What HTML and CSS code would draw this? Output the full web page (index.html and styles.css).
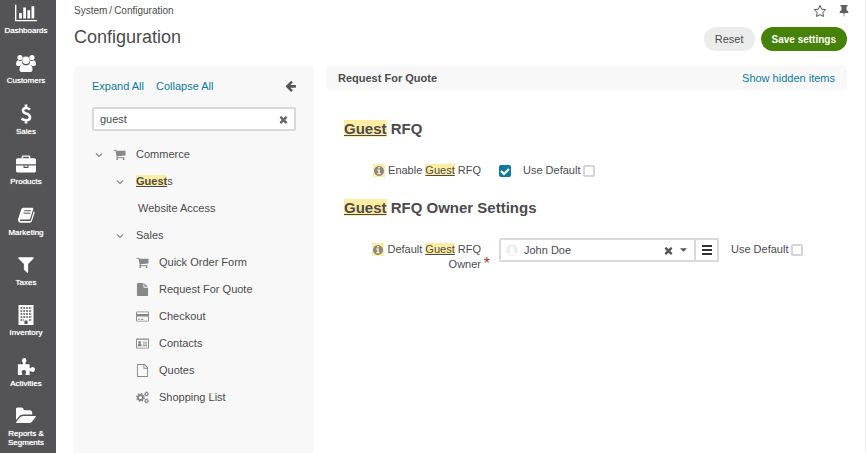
FILE: index.html
```html
<!DOCTYPE html>
<html lang="en">
<head>
<meta charset="utf-8">
<meta name="viewport" content="width=device-width, initial-scale=1">
<title>Configuration</title>
<link rel="stylesheet" href="styles.css">
</head>
<body>
<svg class="defs" aria-hidden="true">
  <symbol id="cart" viewBox="0 0 1792 1792"><path d="M704 1536q0 52-38 90t-90 38-90-38-38-90 38-90 90-38 90 38 38 90zm896 0q0 52-38 90t-90 38-90-38-38-90 38-90 90-38 90 38 38 90zm128-1088v512q0 24-16.500 42.500t-40.500 21.500l-1044 122q13 60 13 70 0 16-24 64h920q26 0 45 19t19 45-19 45-45 19h-1024q-26 0-45-19t-19-45q0-11 8-31.500t16-36 21.500-40 15.500-29.500l-177-823h-204q-26 0-45-19t-19-45 19-45 45-19h256q16 0 28.500 6.500t19.500 15.500 13 24.500 8 26 5.500 29.500 4.500 26h1201q26 0 45 19t19 45z"/></symbol>
  <symbol id="times" viewBox="192 192 1408 1408"><path d="M1490 1322q0 40-28 68l-136 136q-28 28-68 28t-68-28l-294-294-294 294q-28 28-68 28t-68-28l-136-136q-28-28-28-68t28-68l294-294-294-294q-28-28-28-68t28-68l136-136q28-28 68-28t68 28l294 294 294-294q28-28 68-28t68 28l136 136q28 28 28 68t-28 68l-294 294 294 294q28 28 28 68z"/></symbol>
  <symbol id="info" viewBox="128 128 1536 1536"><path d="M1152 1376v-160q0-14-9-23t-23-9h-96v-512q0-14-9-23t-23-9h-320q-14 0-23 9t-9 23v160q0 14 9 23t23 9h96v320h-96q-14 0-23 9t-9 23v160q0 14 9 23t23 9h448q14 0 23-9t9-23zm-128-896v-160q0-14-9-23t-23-9h-192q-14 0-23 9t-9 23v160q0 14 9 23t23 9h192q14 0 23-9t9-23zm640 416q0 209-103 385.500t-279.500 279.500-385.500 103-385.500-103-279.500-279.500-103-385.500 103-385.500 279.500-279.500 385.500-103 385.500 103 279.500 279.500 103 385.500z"/></symbol>
  <symbol id="chevron" viewBox="0 0 8 8"><path d="M1 2.500 4 5.500 7 2.500" fill="none" stroke="currentColor" stroke-width="1.200"/></symbol>
</svg>
<div class="app">
  <nav class="nav" aria-label="Main">
    <a href="#"><svg class="wide" viewBox="0 128 2048 1536"><path d="M640 896v512h-256v-512h256zm384-512v1024h-256v-1024h256zm1024 1152v128h-2048v-1536h128v1408h1920zm-640-896v768h-256v-768h256zm384-384v1152h-256v-1152h256z"/></svg><span>Dashboards</span></a>
    <a href="#"><svg viewBox="0 0 20 18"><circle cx="4" cy="3.500" r="2.600"/><circle cx="16" cy="3.500" r="2.600"/><path d="M2 6.200Q4 7.700 6 6.500 5.700 9 7 10.500 4.500 10.500 3.500 12H2Q0 12 0 10 0 7 2 6.200zM18 6.200Q16 7.700 14 6.500 14.300 9 13 10.500 15.500 10.500 16.500 12H18Q20 12 20 10 20 7 18 6.200z"/><circle cx="10" cy="6.200" r="3.700"/><path d="M6.700 10.300Q10 12.500 13.300 10.300 16.500 11 16.500 15.500 16.500 18 14 18H6Q3.500 18 3.500 15.500 3.500 11 6.700 10.300z"/></svg><span>Customers</span></a>
    <a href="#"><svg viewBox="0 0 20 20"><path d="M14 5.500Q12 4 10 4 7 4 7 6.500 7 8.500 10 9.500 14 10.500 14 13.500 14 16.300 10 16.300 7.500 16.300 5.500 14.500M10 .500V4M10 16V19.500" fill="none" stroke="#fff" stroke-width="2.600"/></svg><span>Sales</span></a>
    <a href="#"><svg viewBox="0 0 1792 1536"><path d="M640 256h512v-128h-512v128zm1152 640v480q0 66-47 113t-113 47h-1472q-66 0-113-47t-47-113v-480h672v160q0 26 19 45t45 19h320q26 0 45-19t19-45v-160h672zm-768 0v128h-256v-128h256zm768-480v384h-1792v-384q0-66 47-113t113-47h352v-160q0-40 28-68t68-28h576q40 0 68 28t28 68v160h352q66 0 113 47t47 113z"/></svg><span>Products</span></a>
    <a href="#"><svg class="small" viewBox="0 0 20 18"><path d="M7 1H17Q18.500 1 18 2.700L14.700 13Q14.300 14 13 14H4Q3 14 3.200 15 3.400 15.700 4.300 15.700H14Q15.200 15.700 15.500 14.700L18.600 4.700Q20 5.200 19.500 6.800L16.500 16Q16 17.500 14.300 17.500H4Q2 17.500 1.200 15.300 .800 14 1.500 12.500L4.700 2.800Q5.200 1 7 1z"/><path d="M8 4.300H15.500M7.200 7H14.700" stroke="#515153" stroke-width="1.100"/></svg><span>Marketing</span></a>
    <a href="#"><svg class="small" viewBox="80 144 1632 1632"><path d="M1595 295q17 41-14 70l-493 493v742q0 42-39 59-13 5-25 5-27 0-45-19l-256-256q-19-19-19-45v-486l-493-493q-31-29-14-70 17-39 59-39h1280q42 0 59 39z"/></svg><span>Taxes</span></a>
    <a href="#"><svg viewBox="0 0 20 20"><path d="M2.500 0H17.500V20H2.500z"/><path d="M4.500 3H16M4.500 6H16M4.500 9H16M4.500 12H16M4.500 15H8M12.900 15H16" fill="none" stroke="#515153" stroke-width="1.700" stroke-dasharray="1.800 1"/><path d="M8.500 15.500H11.500V19H8.500z" fill="#515153"/></svg><span>Inventory</span></a>
    <a href="#"><svg class="small" viewBox="0 0 20 20"><path d="M1 8H6Q7.300 8 6.500 6.500 5.300 5 5.500 3.500 6 1.200 8 1.200T10.500 3.500Q10.700 5 9.500 6.500 8.800 8 10 8H14V11.500Q14 13 15.500 12 17 10.700 18.500 11.500 20 12.300 20 14T18.500 16.300Q17 17 15.500 15.800 14 15 14 16.500V20H10.500Q9 20 9.500 18.500 10.500 17 10 15.800 9.300 14.500 7.700 14.500T5.300 15.800Q4.800 17 5.800 18.500 6.300 20 5 20H1z"/></svg><span>Activities</span></a>
    <a href="#"><svg viewBox="0 256 1820 1280"><path d="M1815 952q0 31-31 66l-336 396q-43 51-120.500 86.500t-143.500 35.500h-1088q-34 0-60.500-13t-26.500-43q0-31 31-66l336-396q43-51 120.500-86.500t143.500-35.500h1088q34 0 60.500 13t26.500 43zm-343-344v160h-832q-94 0-197 47.500t-164 119.500l-337 396-5 6v-985q0-92 66-158t158-66h320q92 0 158 66t66 158v32h544q92 0 158 66t66 158z"/></svg><span>Reports &amp; Segments</span></a>
  </nav>
  <div class="page">
    <header class="top">
      <div class="crumbs"><a href="#">System</a><span>/</span><span>Configuration</span></div>
      <div class="page-tools">
        <button type="button" aria-label="Add to favorites"><svg viewBox="0 0 14 14"><path d="M7 1.500 8.700 5.200 12.700 5.700 9.800 8.500 10.500 12.500 7 10.600 3.500 12.500 4.200 8.500 1.300 5.700 5.300 5.200z" fill="none" stroke="#555" stroke-width="1"/></svg></button>
        <button type="button" aria-label="Pin page"><svg viewBox="0 0 14 14"><path d="M3.500 1H10.500V2.500H9.500V6Q11.500 7 11.500 9H7.600L7 13.500 6.400 9H2.500Q2.500 7 4.500 6V2.500H3.500z"/></svg></button>
      </div>
    </header>
    <div class="title-row">
      <h1>Configuration</h1>
      <div class="actions">
        <button type="button" class="btn">Reset</button>
        <button type="submit" form="config" class="btn btn-primary">Save settings</button>
      </div>
    </div>
    <div class="columns">
      <aside class="sidebar">
        <div class="side-head">
          <a href="#">Expand All</a><a href="#">Collapse All</a>
          <button type="button" aria-label="Hide panel"><svg viewBox="64 160 1600 1500"><path d="M1664 896v128q0 53-32.500 90.500t-84.500 37.500h-704l293 294q38 36 38 90t-38 90l-75 76q-37 37-90 37-52 0-91-37l-651-652q-37-37-37-90 0-52 37-91l651-650q38-38 91-38 52 0 90 38l75 74q38 38 38 91t-38 91l-293 293h704q52 0 84.500 37.500t32.500 90.500z" transform="translate(0 -64)"/></svg></button>
        </div>
        <div class="search">
          <input type="text" value="guest" aria-label="Search configuration">
          <button type="button" aria-label="Clear search"><svg><use href="#times"/></svg></button>
        </div>
        <ul class="tree">
          <li><a href="#" class="lvl1"><svg class="chev"><use href="#chevron"/></svg><svg class="ico"><use href="#cart"/></svg><span>Commerce</span></a></li>
          <li><a href="#" class="lvl2"><svg class="chev"><use href="#chevron"/></svg><span><mark class="strong">Guest</mark>s</span></a></li>
          <li><a href="#" class="lvl3 plain"><span>Website Access</span></a></li>
          <li><a href="#" class="lvl2"><svg class="chev"><use href="#chevron"/></svg><span>Sales</span></a></li>
          <li><a href="#" class="lvl3"><svg class="ico"><use href="#cart"/></svg><span>Quick Order Form</span></a></li>
          <li><a href="#" class="lvl3"><svg class="ico" viewBox="0 0 1792 1792"><path d="M1152 512v-472q22 14 36 28l408 408q14 14 28 36h-472zm-128 32q0 40 28 68t68 28h544v1056q0 40-28 68t-68 28h-1344q-40 0-68-28t-28-68v-1600q0-40 28-68t68-28h800v544z"/></svg><span>Request For Quote</span></a></li>
          <li><a href="#" class="lvl3"><svg class="ico" viewBox="0 0 14 14"><path d="M1.500 1.500H12.500Q14 1.500 14 3V11Q14 12.500 12.500 12.500H1.500Q0 12.500 0 11V3Q0 1.500 1.500 1.500zM1 3.200V4.200H13V3.200Q13 2.500 12.500 2.500H1.500Q1 2.500 1 3.200zM1 7V11Q1 11.500 1.500 11.500H12.500Q13 11.500 13 11V7z" fill-rule="evenodd"/><path d="M2 9.500H4V10.500H2zM5 9.500H8V10.500H5z"/></svg><span>Checkout</span></a></li>
          <li><a href="#" class="lvl3"><svg class="ico" viewBox="0 0 14 14"><path d="M1 1.500H13Q14 1.500 14 2.500V11.500Q14 12.500 13 12.500H1Q0 12.500 0 11.500V2.500Q0 1.500 1 1.500zM1 3V11.500H13V3z" fill-rule="evenodd"/><circle cx="4" cy="5.900" r="1.500"/><path d="M1.800 10Q1.800 7.300 3 7H5Q6.200 7.300 6.200 10zM7.500 5H12V6H7.500zM7.500 7H9.500V8H7.500zM10 7H12V8H10zM7.500 9H12V10H7.500z"/></svg><span>Contacts</span></a></li>
          <li><a href="#" class="lvl3"><svg class="ico" viewBox="0 0 1792 1792"><path d="M1596 380q28 28 48 76t20 88v1152q0 40-28 68t-68 28h-1344q-40 0-68-28t-28-68v-1600q0-40 28-68t68-28h896q40 0 88 20t76 48zm-444-244v376h376q-10-29-22-41l-313-313q-12-12-41-22zm384 1528v-1024h-416q-40 0-68-28t-28-68v-416h-768v1536h1280z"/></svg><span>Quotes</span></a></li>
          <li><a href="#" class="lvl3"><svg class="ico gears" viewBox="0 0 14 14"><circle cx="4.800" cy="7" r="2.700" stroke-width="2"/><circle cx="4.800" cy="7" r="4.100" stroke-width="1.400" stroke-dasharray="1.600 1.620"/><circle cx="11.400" cy="3.300" r="1.500" stroke-width="1.200"/><circle cx="11.400" cy="3.300" r="2.300" stroke-width=".800" stroke-dasharray="1 .806"/><circle cx="11.400" cy="10.700" r="1.500" stroke-width="1.200"/><circle cx="11.400" cy="10.700" r="2.300" stroke-width=".800" stroke-dasharray="1 .806"/></svg><span>Shopping List</span></a></li>
        </ul>
      </aside>
      <main class="content">
        <div class="content-head"><strong>Request For Quote</strong><a href="#">Show hidden items</a></div>
        <form id="config" class="form">
          <h2><mark>Guest</mark> RFQ</h2>
          <div class="row">
            <label class="name" for="enable"><mark class="tip"><svg><use href="#info"/></svg></mark><span>Enable <mark>Guest</mark> RFQ</span></label>
            <input type="checkbox" id="enable" checked>
            <label class="default">Use Default <input type="checkbox"></label>
          </div>
          <h2><mark>Guest</mark> RFQ Owner Settings</h2>
          <div class="row">
            <label class="name" for="owner"><mark class="tip"><svg><use href="#info"/></svg></mark><span>Default <mark>Guest</mark> RFQ <span class="line">Owner</span></span><em>*</em></label>
            <div class="picker">
              <svg class="avatar" viewBox="0 0 12 12"><circle cx="6" cy="6" r="6" fill="#eee"/><path d="M6 2.500Q8 2.500 8 5 8 7 7 8 9.500 8.500 9.500 11H2.500Q2.500 8.500 5 8 4 7 4 5 4 2.500 6 2.500z" fill="#fff"/></svg>
              <select id="owner"><option>John Doe</option></select>
              <button type="button" aria-label="Clear owner"><svg><use href="#times"/></svg></button>
              <svg class="caret" viewBox="0 0 8 4"><path d="M0 0H8L4 4z"/></svg>
              <button type="button" class="list" aria-label="Choose from list"><svg viewBox="0 0 10 10"><path d="M0 0H10V2H0zM0 4H10V6H0zM0 8H10V10H0z"/></svg></button>
            </div>
            <label class="default">Use Default <input type="checkbox"></label>
          </div>
        </form>
      </main>
    </div>
  </div>
</div>
</body>
</html>
```

FILE: styles.css
```css
* { box-sizing: border-box; }
body {
  margin: 0;
  font: 11px/15px "Liberation Sans", Arial, sans-serif;
  color: #4b4b4d;
  background: #fff;
}
a { color: inherit; text-decoration: none; }
button {
  border: 0;
  padding: 0;
  background: none;
  font: inherit;
  color: inherit;
  cursor: pointer;
}
svg { display: block; fill: currentColor; flex: none; }
.defs { position: absolute; width: 0; height: 0; }
mark { color: inherit; background: #ffeca3; text-decoration: underline; }
.app { display: flex; min-height: 100vh; }

.nav {
  width: 56px;
  flex: none;
  display: flex;
  flex-direction: column;
  justify-content: space-between;
  padding: 3px 4px 6px 0;
  background: #545456;
  color: #fff;
  font-size: 8px;
  line-height: 9px;
  text-align: center;
}
.nav a { display: flex; flex-direction: column; align-items: center; gap: 3px; }
.nav svg { width: 20px; height: 20px; }
.nav svg.small { width: 18px; }
.nav svg.wide { width: 22px; }
.nav span { max-width: 48px; text-shadow: 0 0 1px #fff; }

.page {
  flex: 1;
  min-width: 0;
  display: flex;
  flex-direction: column;
  padding: 3px 18px 0;
  border-right: 1px solid #eee;
}
.top { display: flex; justify-content: space-between; }
.crumbs { display: flex; gap: 2px; font-size: 10px; }
.page-tools { display: flex; gap: 10px; color: #5f5f61; }
.page-tools svg { width: 14px; height: 14px; }
.page-tools button:last-child { margin-right: -4px; }
.title-row { display: flex; justify-content: space-between; margin-top: 7px; }
h1 { margin: 0; font-size: 18px; line-height: 24px; font-weight: 400; }
.actions { display: flex; gap: 6px; padding-top: 2px; }
.btn { height: 24px; padding: 0 11px; border-radius: 12px; background: #ececec; }
.btn-primary { background: #478208; color: #fff; font-size: 10px; font-weight: 700; }
.columns { flex: 1; display: flex; gap: 12px; margin-top: 15px; }

.sidebar { width: 240px; flex: none; padding: 12px 18px; background: #f8f8f8; border-radius: 4px 4px 0 0; }
.side-head { display: flex; align-items: center; gap: 12px; height: 16px; }
.side-head a, .content-head a { color: #0d7a9d; }
.side-head button { margin-left: auto; }
.side-head svg { width: 11px; height: 11px; color: #555; }
.search { display: flex; align-items: center; height: 24px; margin-top: 13px; padding-right: 6px; border: 2px solid #d9d9d9; border-radius: 2px; background: #fff; }
.search input { flex: 1; min-width: 0; border: 0; padding: 0 6px; background: none; font: inherit; color: inherit; outline: 0; }
.search svg, .picker button svg { width: 9px; height: 9px; }
.search svg { color: #666; }
.tree { list-style: none; margin: 10px 0 0; padding: 0; }
.tree a { display: flex; align-items: center; height: 27px; }
.tree svg { color: #888; }
.chev { width: 8px; height: 8px; margin-right: 12px; }
.ico { width: 13px; height: 13px; margin-right: 10px; }
.gears { fill: none; stroke: currentColor; }
.lvl1 { padding-left: 3px; }
.lvl1 .chev { margin-right: 10px; }
.lvl2 { padding-left: 24px; }
.lvl3 { padding-left: 44px; }
.lvl3.plain { padding-left: 46px; }
.strong { font-weight: 700; }

.content { flex: 1; min-width: 0; }
.content-head { display: flex; justify-content: space-between; align-items: center; height: 24px; padding: 0 12px; background: #f8f8f8; border-radius: 4px; }
.form { padding: 29px 18px 0; }
h2 { margin: 0; font-size: 15px; line-height: 20px; }
.row { display: flex; align-items: flex-start; padding: 24px 0 20px; }
.row .name { position: relative; display: flex; justify-content: flex-end; gap: 3px; width: 137px; flex: none; margin-right: 18px; text-align: right; }
.line { display: block; }
.row em { position: absolute; right: -9px; top: 14px; color: #b5361e; font-size: 16px; font-style: normal; }
.tip { display: flex; align-items: center; justify-content: center; width: 12px; height: 13px; flex: none; margin-top: 1px; color: #888; }
.tip svg { width: 10px; height: 10px; }
input[type="checkbox"] { appearance: none; width: 12px; height: 12px; flex: none; margin: 2px 0 0; border: 2px solid #d5d5d5; border-radius: 2px; background: #fff; }
input[type="checkbox"]:checked { border: 0; background: #0d7a9d url("data:image/svg+xml,%3Csvg xmlns='http://www.w3.org/2000/svg' viewBox='0 0 12 12'%3E%3Cpath d='M2 6l3 3 5-5' fill='none' stroke='white' stroke-width='2.200'/%3E%3C/svg%3E"); }
.default { display: flex; gap: 3px; margin-left: 12px; }
.picker { display: flex; align-items: center; width: 220px; height: 24px; margin: -4px 0; padding-left: 5px; border: 2px solid #d9d9d9; border-radius: 2px; }
.avatar { width: 12px; height: 12px; }
.picker select { appearance: none; flex: 1; min-width: 0; border: 0; padding: 0 6px; background: none; font: inherit; color: inherit; }
.picker button { color: #555; }
.caret { width: 7px; height: 4px; margin: 0 7px 0 7px; color: #555; }
.picker .list { align-self: stretch; display: flex; align-items: center; justify-content: center; width: 23px; border-left: 2px solid #d9d9d9; color: #333; }
.picker .list svg { width: 10px; height: 10px; }
```
